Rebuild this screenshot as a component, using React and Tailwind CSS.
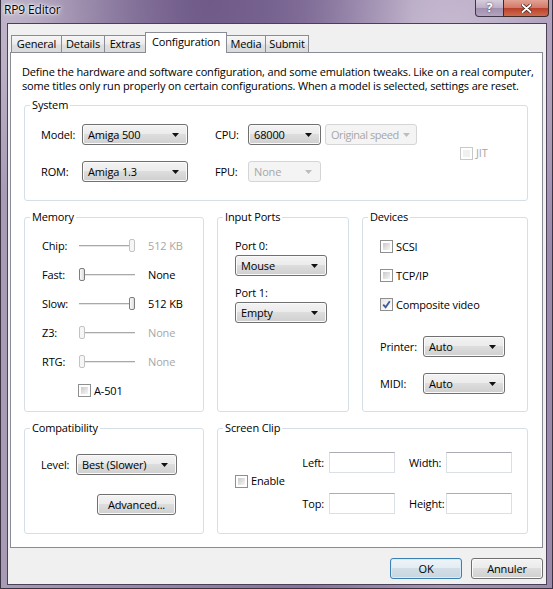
import React from 'react';

// Vista-style "RP9 Editor" dialog, Configuration tab

function Combo({ value, width, disabled = false, tight = false }) {
    return (
        <div
            className={`flex h-[21px] shrink-0 items-center justify-between rounded-[3px] border pl-[5px] ${tight ? 'pr-[6px] tracking-[-0.45px]' : 'pr-[8px]'} ${width} ${
                disabled
                    ? 'border-[#d5d5d5] bg-[#f4f4f4] text-[#a7a7a7]'
                    : 'border-[#707070] bg-[linear-gradient(180deg,#f3f3f3_0%,#ebebeb_49%,#dddddd_50%,#cfcfcf_100%)] text-black shadow-[inset_0_0_0_1px_#fafafa]'
            }`}
        >
            <span className="whitespace-nowrap">{value}</span>
            <svg width="7" height="4" viewBox="0 0 7 4" className="shrink-0">
                <path d="M0 0H7L3.5 4Z" fill={disabled ? '#bdbdbd' : '#111'} />
            </svg>
        </div>
    );
}

function Check({ checked = false, disabled = false }) {
    if (checked) {
        return (
            <span className="flex h-[13px] w-[13px] shrink-0 items-center justify-center border border-[#8e8f8f] bg-[linear-gradient(135deg,#e6e6e6,#ffffff)]">
                <svg width="9" height="9" viewBox="0 0 9 9">
                    <path d="M1.2 4.6L3.6 7.2L7.8 1.2" fill="none" stroke="#3f5a98" strokeWidth="1.8" />
                </svg>
            </span>
        );
    }
    return (
        <span
            className={`flex h-[13px] w-[13px] shrink-0 border bg-white p-[2px] ${
                disabled ? 'border-[#c9c9c9]' : 'border-[#8e8f8f]'
            }`}
        >
            <span
                className={`h-full w-full ${
                    disabled ? 'bg-[#f0f0f0]' : 'bg-[linear-gradient(135deg,#c9c9c9,#f6f6f6)]'
                }`}
            />
        </span>
    );
}

function Slider({ end = false, disabled = false }) {
    return (
        <div className="relative flex h-[13px] w-[56px] shrink-0 items-center">
            <div className="h-[2px] w-full border-t border-[#a9a9a9] bg-[#e6e6e6]" />
            <div
                className={`absolute top-0 h-[13px] w-[6px] rounded-[2px] border ${end ? 'right-0' : 'left-0'} ${
                    disabled
                        ? 'border-[#c3c3c3] bg-[#f6f6f6]'
                        : 'border-[#7d7d7d] bg-[linear-gradient(90deg,#fbfbfb,#dcdcdc)]'
                }`}
            />
        </div>
    );
}

function Group({ title, className = '', children }) {
    return (
        <div className={`relative rounded-[3px] border border-[#d5dfe5] ${className}`}>
            <span className="absolute -top-[8px] left-[5px] bg-white px-[2px] leading-[14px]">{title}</span>
            {children}
        </div>
    );
}

function TextBox() {
    return <div className="h-[21px] w-[66px] shrink-0 border border-[#dbdfe6] border-t-[#abadb3] bg-white" />;
}

const tabs = [
    { name: 'General', w: 'w-[51px]' },
    { name: 'Details', w: 'w-[44px]' },
    { name: 'Extras', w: 'w-[42px]' },
    { name: 'Configuration', w: 'w-[82px]', active: true },
    { name: 'Media', w: 'w-[40px]' },
    { name: 'Submit', w: 'w-[44px]' },
];

const memory = [
    { label: 'Chip:', value: '512 KB', end: true, disabled: true },
    { label: 'Fast:', value: 'None', end: false, disabled: false },
    { label: 'Slow:', value: '512 KB', end: true, disabled: false },
    { label: 'Z3:', value: 'None', end: false, disabled: true },
    { label: 'RTG:', value: 'None', end: false, disabled: true },
];

const devices = [
    { label: 'SCSI', checked: false },
    { label: 'TCP/IP', checked: false },
    { label: 'Composite video', checked: true },
];

export default function App() {
    return (
        <div className="flex h-[589px] w-[553px] flex-col overflow-hidden border-x border-b border-[#3a3344] bg-[radial-gradient(ellipse_at_38%_0%,#6f5a88_0%,transparent_42%),radial-gradient(ellipse_at_82%_8%,#c8bcd2_0%,transparent_30%),radial-gradient(ellipse_at_6%_4%,#c2b8cc_0%,transparent_22%),linear-gradient(90deg,#a89bb6_0%,#9583a8_30%,#86729d_55%,#a595b4_80%,#9a8aab_100%)] font-['Open_Sans',sans-serif] text-[11px] leading-[14px] tracking-[-0.15px] text-black">
            {/* Title bar */}
            <div className="flex h-[23px] shrink-0 items-start">
                <span className="ml-[3px] mt-[3px] text-[12px] [text-shadow:0_0_6px_#ffffff,0_0_3px_#ffffff,0_0_2px_#ffffff]">
                    RP9 Editor
                </span>
                <div className="ml-auto mr-[3px] flex">
                    <div className="flex h-[17px] w-[29px] items-center justify-center rounded-bl-[4px] border border-t-0 border-[#3f3548] bg-[linear-gradient(180deg,#d6cddc_0%,#bcaec6_50%,#a18fae_51%,#b3a4bf_100%)] text-[12px] font-bold text-white [text-shadow:0_0_2px_#3a3040]">
                        ?
                    </div>
                    <div className="-ml-px flex h-[17px] w-[46px] items-center justify-center rounded-br-[4px] border border-t-0 border-[#3f2a2a] bg-[linear-gradient(180deg,#e3a294_0%,#d27868_50%,#b8402a_51%,#cf6a4e_100%)]">
                        <svg width="11" height="9" viewBox="0 0 11 9">
                            <path d="M1.5 1L9.5 8M9.5 1L1.5 8" stroke="#3a1a14" strokeWidth="3.4" strokeLinecap="round" />
                            <path d="M1.5 1L9.5 8M9.5 1L1.5 8" stroke="#ffffff" strokeWidth="2" strokeLinecap="round" />
                        </svg>
                    </div>
                </div>
            </div>

            {/* Client area */}
            <div className="ml-[6px] flex h-[562px] w-[540px] flex-col border border-[#4a4156] bg-[#f0f0f0] pl-[2px] pr-[3px] pt-[8px]">
                {/* Tabs */}
                <div className="flex h-[21px] items-end pl-[1px]">
                    {tabs.map((t, i) =>
                        t.active ? (
                            <div
                                key={t.name}
                                className={`relative z-10 -ml-px flex h-[21px] items-start justify-center border border-b-0 border-[#898c95] bg-white pt-[2px] ${t.w}`}
                            >
                                {t.name}
                            </div>
                        ) : (
                            <div
                                key={t.name}
                                className={`flex h-[18px] items-start justify-center border border-b-0 border-[#898c95] bg-[linear-gradient(180deg,#f6f6f6_0%,#ececec_45%,#dfdfdf_55%,#d9d9d9_100%)] pt-[1px] ${
                                    i > 0 ? '-ml-px' : ''
                                } ${t.w}`}
                            >
                                {t.name}
                            </div>
                        )
                    )}
                </div>

                {/* Tab page */}
                <div className="-mt-px h-[496px] border border-[#898c95] bg-white px-[11px] pt-[12px]">
                    <p className="whitespace-nowrap">
                        Define the hardware and software configuration, and some emulation tweaks. Like on a real computer,
                        <br />
                        some titles only run properly on certain configurations. When a model is selected, settings are reset.
                    </p>

                    <div className="ml-[2px] mt-[12px] flex w-[504px] flex-col gap-[16px]">
                        {/* System */}
                        <Group title="System" className="h-[96px] pl-[16px] pt-[18px]">
                            <div className="flex items-center">
                                <div className="flex flex-col gap-[16px]">
                                    <div className="flex items-center">
                                        <span className="w-[41px]">Model:</span>
                                        <Combo value="Amiga 500" width="w-[106px]" />
                                        <span className="ml-[27px] w-[33px]">CPU:</span>
                                        <Combo value="68000" width="w-[73px]" />
                                        <div className="ml-[4px]">
                                            <Combo value="Original speed" width="w-[92px]" disabled tight />
                                        </div>
                                    </div>
                                    <div className="flex items-center">
                                        <span className="w-[41px]">ROM:</span>
                                        <Combo value="Amiga 1.3" width="w-[106px]" />
                                        <span className="ml-[27px] w-[33px] text-black">FPU:</span>
                                        <Combo value="None" width="w-[73px]" disabled />
                                    </div>
                                </div>
                                <div className="ml-[43px] flex items-center gap-[3px] text-[#a7a7a7]">
                                    <Check disabled />
                                    JIT
                                </div>
                            </div>
                        </Group>

                        <div className="flex gap-[13px]">
                            {/* Memory */}
                            <Group title="Memory" className="h-[195px] w-[180px] shrink-0 pl-[17px] pt-[13px]">
                                {memory.map((m) => (
                                    <div key={m.label} className="flex h-[29px] items-center">
                                        <span className="w-[37px]">{m.label}</span>
                                        <Slider end={m.end} disabled={m.disabled} />
                                        <span className={`ml-[13px] ${m.disabled ? 'text-[#a7a7a7]' : ''}`}>{m.value}</span>
                                    </div>
                                ))}
                                <div className="flex h-[29px] items-center gap-[3px] pl-[36px]">
                                    <Check />
                                    A-501
                                </div>
                            </Group>

                            {/* Input ports */}
                            <Group title="Input Ports" className="h-[195px] w-[132px] shrink-0 pl-[17px] pt-[21px]">
                                <div>Port 0:</div>
                                <div className="mt-[2px]">
                                    <Combo value="Mouse" width="w-[92px]" />
                                </div>
                                <div className="mt-[10px]">Port 1:</div>
                                <div className="mt-[2px]">
                                    <Combo value="Empty" width="w-[92px]" />
                                </div>
                            </Group>

                            {/* Devices */}
                            <Group title="Devices" className="h-[195px] flex-1 pl-[17px] pt-[14px]">
                                {devices.map((d) => (
                                    <div key={d.label} className="flex h-[29px] items-center gap-[3px]">
                                        <Check checked={d.checked} />
                                        {d.label}
                                    </div>
                                ))}
                                <div className="mt-[17px] flex items-center">
                                    <span className="w-[43px]">Printer:</span>
                                    <Combo value="Auto" width="w-[82px]" />
                                </div>
                                <div className="mt-[16px] flex items-center">
                                    <span className="w-[43px]">MIDI:</span>
                                    <Combo value="Auto" width="w-[82px]" />
                                </div>
                            </Group>
                        </div>

                        <div className="flex gap-[13px]">
                            {/* Compatibility */}
                            <Group title="Compatibility" className="h-[106px] w-[180px] shrink-0 pl-[16px] pt-[25px]">
                                <div className="flex items-center">
                                    <span className="w-[35px]">Level:</span>
                                    <Combo value="Best (Slower)" width="w-[101px]" />
                                </div>
                                <button className="ml-[56px] mt-[19px] flex h-[21px] w-[79px] items-center justify-center rounded-[3px] border border-[#707070] bg-[linear-gradient(180deg,#f3f3f3_0%,#ebebeb_49%,#dddddd_50%,#cfcfcf_100%)] shadow-[inset_0_0_0_1px_#fafafa]">
                                    Advanced...
                                </button>
                            </Group>

                            {/* Screen clip */}
                            <Group title="Screen Clip" className="flex h-[106px] flex-1 items-start pl-[17px] pt-[23px]">
                                <div className="mt-[22px] flex w-[61px] shrink-0 items-center gap-[3px]">
                                    <Check />
                                    Enable
                                </div>
                                <div className="flex flex-col gap-[20px]">
                                    <div className="flex items-center">
                                        <span className="w-[28px] text-right">Left:</span>
                                        <div className="ml-[5px]">
                                            <TextBox />
                                        </div>
                                        <span className="ml-[14px] w-[37px]">Width:</span>
                                        <TextBox />
                                    </div>
                                    <div className="flex items-center">
                                        <span className="w-[28px] text-right">Top:</span>
                                        <div className="ml-[5px]">
                                            <TextBox />
                                        </div>
                                        <span className="ml-[14px] w-[37px]">Height:</span>
                                        <TextBox />
                                    </div>
                                </div>
                            </Group>
                        </div>
                    </div>
                </div>

                {/* Dialog buttons */}
                <div className="mt-[10px] flex justify-end gap-[9px]">
                    <button className="flex h-[21px] w-[72px] items-center justify-center rounded-[3px] border border-[#3c7fb1] bg-[linear-gradient(180deg,#eef4f8_0%,#e4ecf2_49%,#d2dee6_50%,#c8d6e0_100%)] shadow-[inset_0_0_0_1px_#d6ecfa]">
                        OK
                    </button>
                    <button className="flex h-[21px] w-[72px] items-center justify-center rounded-[3px] border border-[#707070] bg-[linear-gradient(180deg,#f3f3f3_0%,#ebebeb_49%,#dddddd_50%,#cfcfcf_100%)] shadow-[inset_0_0_0_1px_#fafafa]">
                        Annuler
                    </button>
                </div>
            </div>
        </div>
    );
}
